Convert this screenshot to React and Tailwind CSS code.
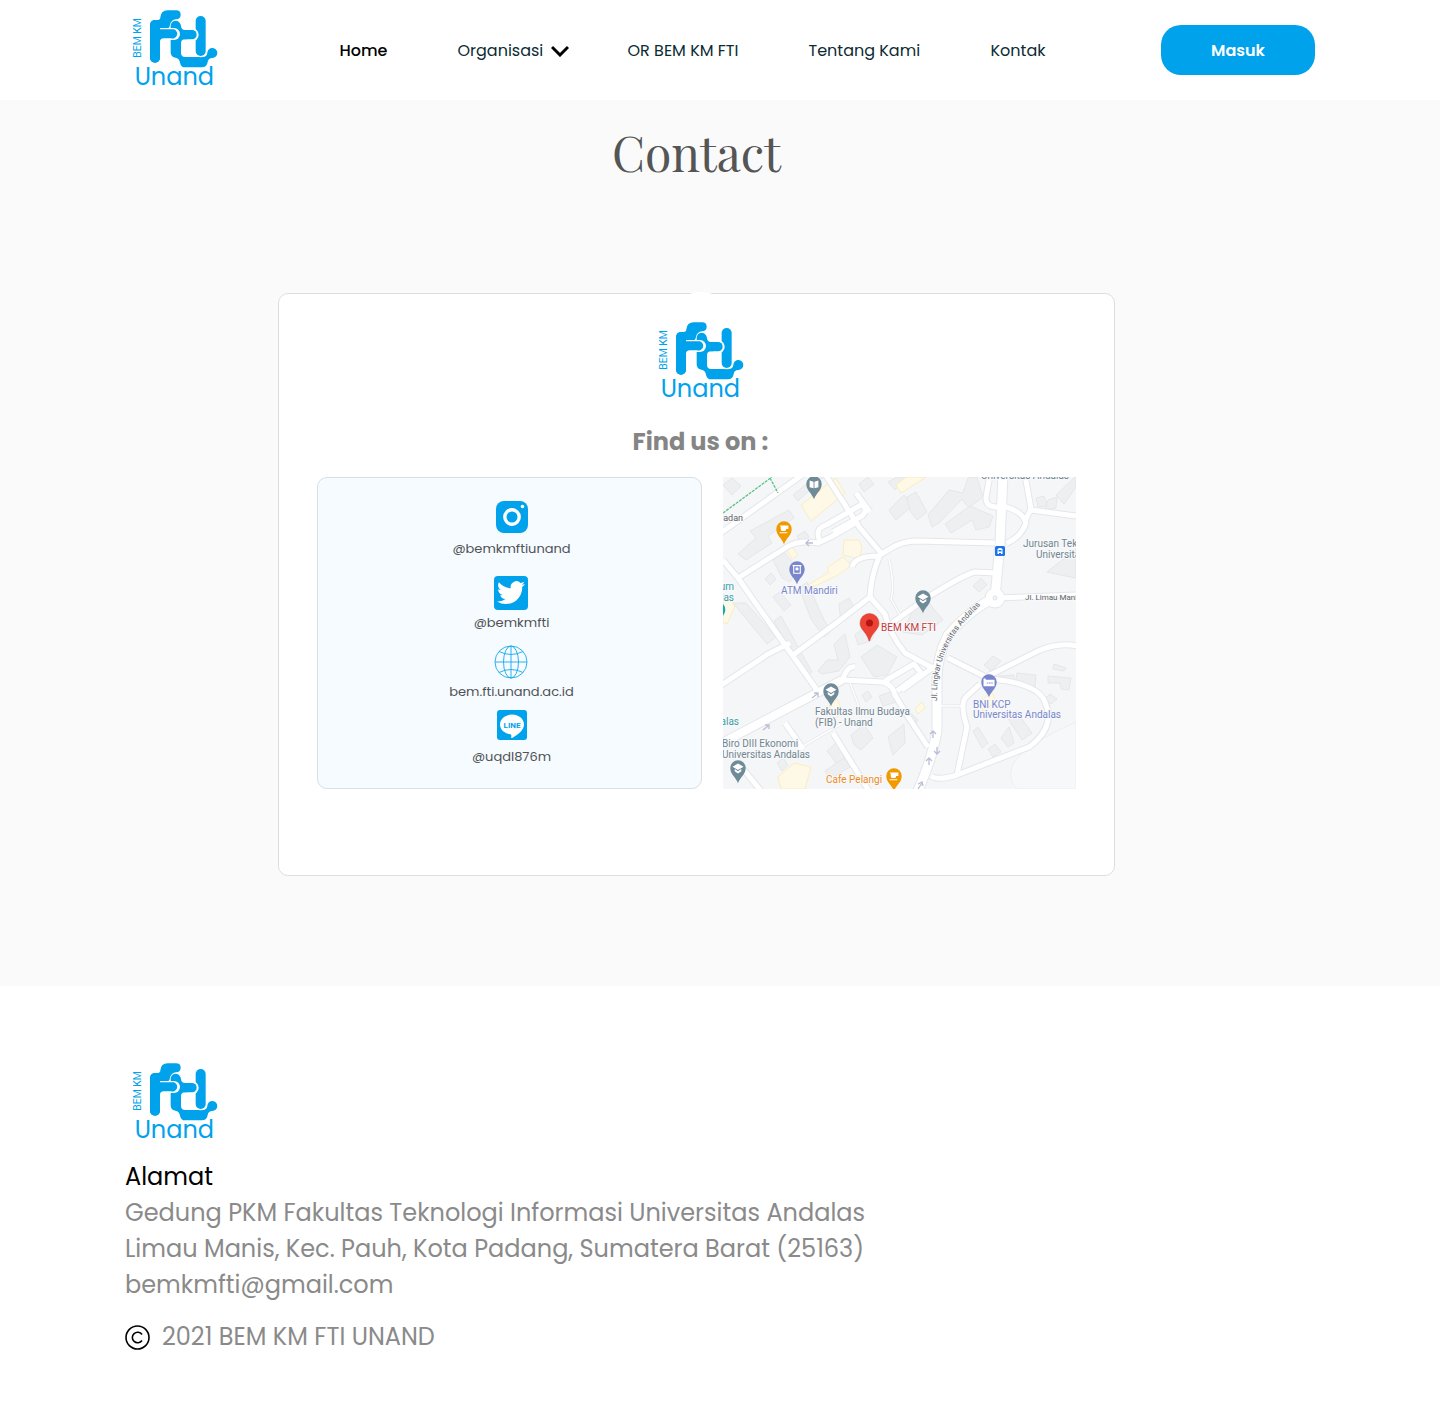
import React from "react";

const sans = "font-['Poppins',Inter,sans-serif]";

function Logo() {
  return (
    <svg viewBox="0 0 300 300" className="size-[100px] shrink-0" role="img" aria-label="BEM KM FTI Unand">
      <g fill="#00a2eb">
        <path d="M75 76Q75 60 91 60H98Q106 60 106 52Q108 31 128 31H153Q167 31 167 44Q167 57 153 58Q138 60 135 74Q134 86 122 86H105V173A15 15 0 0 1 75 173Z" />
        <path d="M137 76Q139 62 153 62Q166 64 168 78Q169 90 180 90H186V118H180Q168 118 168 130V158Q168 171 181 171H232Q246 171 247 158A15 15 0 1 1 262 174Q250 174 248 186Q246 202 230 202H180Q168 202 165 188Q163 174 151 173Q137 171 137 157Z" />
      </g>
      <path d="M108 102H147" stroke="#fff" strokeWidth="36" strokeLinecap="round" />
      <path d="M100 88H147A14 14 0 1 1 138 115H116Q105 115 105 126V130H90Z" fill="#00a2eb" />
      <path d="M90 76V173" stroke="#00a2eb" strokeWidth="30" strokeLinecap="round" />
      <path d="M227 63V153" stroke="#fff" strokeWidth="38" strokeLinecap="round" />
      <path d="M227 63V153" stroke="#00a2eb" strokeWidth="30" strokeLinecap="round" />
      <circle cx="201" cy="104" r="20" fill="#fff" />
      <path d="M180 104H201" stroke="#00a2eb" strokeWidth="28" strokeLinecap="round" />
      <text x="29" y="254" fontFamily="Poppins, Inter, sans-serif" fontSize="72" fill="#00a2eb">Unand</text>
      <text transform="translate(49 173) rotate(-90)" fontFamily="Roboto, sans-serif" fontSize="31" fill="#00a2eb">BEM KM</text>
    </svg>
  );
}

const buildings = [
  "M0 8 9 1 18 9 9 18Z",
  "M15 77 33 61 27 54 66 33 71 41 45 59 49 66 23 83Z",
  "M70 18 92 0 101 0 75 24Z",
  "M74 59 82 54 86 60 78 65Z",
  "M50 83 61 75 75 92 67 105 59 101Z",
  "M42 102 48 96 53 102 47 108Z",
  "M50 120 57 115 68 128 61 134Z",
  "M76 111 84 105 101 143 108 154 101 160 88 142Z",
  "M116 127 126 121 131 130 127 139 117 138Z",
  "M166 33 181 18 189 29 173 43Z",
  "M165 5 174 0 184 0 172 13Z",
  "M136 7 145 0 151 7 141 15Z",
  "M184 20 193 15 204 35 194 43 187 34Z",
  "M205 38 226 13 240 16 245 1 254 0 260 20 246 31 239 22 216 46 209 50Z",
  "M222 47 247 29 270 39 266 50 253 53 249 43 228 56Z",
  "M313 21 321 19 325 29 315 30Z",
  "M325 23 334 20 333 31 322 33Z",
  "M333 18 353 -1 353 10 341 27Z",
  "M324 95 353 72 353 101 347 100Z",
  "M250 109 258 101 264 108 256 115Z",
  "M191 130 201 119 210 131 220 143 199 158 180 155Z",
  "M95 194 104 183 115 183 111 167 122 157 127 180 116 194 99 197Z",
  "M132 158 146 145 153 154 148 164 135 168Z",
  "M138 180 154 168 174 180 164 198 151 200Z",
  "M51 144 58 139 89 195 82 202Z",
  "M23 126 53 160 44 167 10 126Z",
  "M139 218 145 214 149 220 143 225Z",
  "M156 219 170 214 174 225 160 229Z",
  "M128 258 141 247 150 261 138 273 131 268Z",
  "M165 260 181 247 182 266 170 278Z",
  "M104 274 115 264 125 279 114 287Z",
  "M54 286 60 281 65 288 59 294Z",
  "M102 294 121 281 127 290 107 302Z",
  "M261 188 270 179 278 184 268 194Z",
  "M294 196 313 198 312 210 292 207Z",
  "M275 199 291 198 290 207 273 204Z",
  "M325 199 348 201 346 213 338 212 337 206 325 206Z",
  "M331 187 343 191 341 194 330 192Z",
  "M322 222 327 217 334 222 328 227Z",
  "M250 254 255 250 265 266 259 271Z",
  "M265 272 272 267 278 275 270 280Z",
  "M278 261 286 250 291 266 285 270Z",
  "M284 240 293 234 309 256 299 263Z",
  "M188 236 195 243 191 249 185 242Z",
];

const yellow = [
  "M78 28 113 1 122 16 88 44Z",
  "M121 63 136 63 139 71 136 82 120 78Z",
  "M85 108 105 96 105 90 120 80 129 88 113 99 90 110Z",
  "M64 73 69 70 75 78 69 82Z",
  "M173 8 183 0 203 0 178 16Z",
  "M0 120 7 123 12 129 4 147 0 145Z",
  "M106 229 114 222 120 235 110 243Z",
  "M55 300 71 286 88 290 82 312 58 312Z",
  "M192 232 199 225 202 231 195 237Z",
  "M256 225 269 215 273 225 260 234Z",
];

const minorRoads = [
  "M-5 58 82 -4",
  "M0 83 15 101 55 158 94 213",
  "M15 101 64 70Q75 63 95 66L108 60 134 45",
  "M97 64Q91 52 103 48L138 28Q146 32 139 39L110 55",
  "M147 35 133 16",
  "M102 -3 137 51 158 76",
  "M129 90Q132 79 155 79L172 69Q182 64 195 64L272 66",
  "M157 78Q148 98 147 120L162 137Q166 156 182 176L208 190",
  "M147 120 112 147 70 178",
  "M-3 209 45 177 67 166",
  "M169 146 205 120Q240 98 252 95L272 96",
  "M267 -2 263 20Q262 29 272 30H283Q300 35 303 46Q298 60 284 66",
  "M302 -2 308 32 302 44M308 33 353 39",
  "M225 181 267 202Q315 206 322 225Q333 250 306 270L234 298Q215 304 208 299",
  "M267 198 315 174Q335 165 355 169",
  "M257 207 244 219Q236 225 244 250L234 298",
  "M119 203 123 195Q127 189 132 190",
  "M119 203 160 205Q170 208 172 218L184 238 205 270",
  "M162 204 191 187 198 196 174 214",
  "M179 213 212 189",
  "M110 256 146 314M62 246 80 272M17 288 38 314",
];

function Pin({ x, y, color, children }) {
  return (
    <g transform={`translate(${x} ${y}) scale(1.1)`}>
      <path d="M0 13C-2 7-7 5-7-1A7 7 0 0 1 7-1C7 5 2 7 0 13Z" fill={color} />
      {children}
    </g>
  );
}

function Book() {
  return <path d="M-4-4-.4-3V3L-4 2ZM4-4 .4-3V3L4 2Z" fill="#fff" />;
}
function Cap() {
  return <path d="M-5-2 0-5 5-2 0 1ZM-3 0 0 2 3 0V2L0 4-3 2Z" fill="#fff" />;
}
function Cup() {
  return <path d="M-4-4H4V-1H2Q2 1 0 1H-1Q-3 1-3-1V-3M-4 2H3V3H-4Z" fill="#fff" />;
}

function CampusMap() {
  return (
    <svg viewBox="0 0 353 312" className="block w-full" role="img" aria-label="Peta lokasi BEM KM FTI" fontFamily="Roboto, sans-serif" fontSize="10">
      <rect width="353" height="312" fill="#f5f6f8" />
      <path d="M353 245Q292 272 288 293Q286 304 294 312H353Z" fill="#f7f8f9" stroke="#eceef0" />
      <g fill="#eeeff1" stroke="#e1e3e6" strokeWidth=".8">
        {buildings.map((d) => <path key={d} d={d} />)}
      </g>
      <g fill="#fef9e7" stroke="#fbe9b4" strokeWidth=".8">
        {yellow.map((d) => <path key={d} d={d} />)}
      </g>
      <g fill="none" stroke="#e5e6ea" strokeLinejoin="round">
        {minorRoads.map((d) => <path key={d} d={d} strokeWidth="7" />)}
        <path d="M-5 268 92 217 119 203" strokeWidth="10" />
        <path d="M280 -3 277 66 272 121Q250 130 225 158 214 180 214 203V253Q210 280 194 316" strokeWidth="11" />
        <path d="M272 121 300 120 355 118" strokeWidth="7" />
        <path d="M218 229H238M75 272 125 243M127 206 140 240M166 82Q172 110 168 122L178 140" strokeWidth="3" />
      </g>
      <circle cx="272" cy="121" r="10" fill="#fff" stroke="#e5e6ea" />
      <g fill="none" stroke="#fff" strokeLinejoin="round">
        {minorRoads.map((d) => <path key={d} d={d} strokeWidth="5" />)}
        <path d="M-5 268 92 217 119 203" strokeWidth="8" />
        <path d="M280 -3 277 66 272 121Q250 130 225 158 214 180 214 203V253Q210 280 194 316" strokeWidth="9" />
        <path d="M272 121 300 120 355 118" strokeWidth="5" />
        <path d="M218 229H238M75 272 125 243M127 206 140 240M166 82Q172 110 168 122L178 140" strokeWidth="1.5" />
      </g>
      <circle cx="272" cy="121" r="2" fill="#f5f6f8" stroke="#e0e2e5" />
      <path d="M0 36 49 0M47 1 55 16" fill="none" stroke="#5cc289" strokeWidth="1.3" strokeDasharray="3 1" />
      <g fill="none" stroke="#b9bed6" strokeWidth="1.3">
        <path d="M90 66H83M86 63 83 66 86 69" />
        <path d="M89 221 94 217M91 216H95V220" />
        <path d="M40 253 45 249M42 248H46V252" />
        <path d="M210 261V254M207 257 210 254 213 257" />
        <path d="M214 270V277M211 274 214 277 217 274" />
        <path d="M206 288V281M203 284 206 281 209 284" />
        <path d="M195 312 199 306M195 307 199 305 200 309" />
      </g>

      <Pin x={91} y={8} color="#6f8b98"><Book /></Pin>
      <Pin x={61} y={53} color="#f29900"><Cup /></Pin>
      <Pin x={74} y={93} color="#7986cb">
        <path d="M-4-4H4M-3-4V3H3V-4" fill="none" stroke="#fff" />
        <circle r="1.5" cy="-1" fill="#fff" />
      </Pin>
      <Pin x={200} y={122} color="#6f8b98"><Cap /></Pin>
      <Pin x={108} y={215} color="#6f8b98"><Cap /></Pin>
      <Pin x={15} y={292} color="#6f8b98"><Cap /></Pin>
      <Pin x={171} y={300} color="#f29900"><Cup /></Pin>
      <Pin x={266} y={206} color="#7986cb">
        <path d="M-5-4H-3V-3H5V3H-5Z" fill="#fff" />
        <path d="M-2 0H4" stroke="#7986cb" strokeDasharray="1.4 .6" />
      </Pin>
      <path d="M0 127Q3 130 2 135L0 139Z" fill="#12a9b5" />
      <path d="M146 164C144 155 137 153 137 146A9.500 9.500 0 0 1 156 146C156 153 149 155 146.500 164Z" fill="#ea4335" stroke="#d8382c" strokeWidth=".5" />
      <circle cx="146.500" cy="146" r="3.500" fill="#b31412" />
      <rect x="272" y="69" width="10" height="10" rx="1.500" fill="#1a73e8" />
      <path d="M274.500 77V72Q277 70 279.500 72V77H278V76H276V77Z" fill="#fff" />
      <path d="M275.500 73H278.500V74.500H275.500Z" fill="#1a73e8" />

      <g stroke="#f8f9fb" strokeWidth="2" paintOrder="stroke">
        <g fill="#71858f">
          <text x="258" y="2">Universitas Andalas</text>
          <text x="300" y="70">Jurusan Teknik</text>
          <text x="313" y="81">Universitas</text>
          <text x="92" y="238">Fakultas Ilmu Budaya</text>
          <text x="92" y="249">(FIB) - Unand</text>
          <text x="-1" y="270">Biro DIII Ekonomi</text>
          <text x="-1" y="281">Universitas Andalas</text>
        </g>
        <g fill="#7986cb">
          <text x="58" y="117">ATM Mandiri</text>
          <text x="250" y="231">BNI KCP</text>
          <text x="250" y="241">Universitas Andalas</text>
        </g>
        <g fill="#3d9ea6">
          <text x="11" y="113" textAnchor="end">Museum</text>
          <text x="11" y="124" textAnchor="end">Andalas</text>
          <text x="16" y="248" textAnchor="end">Andalas</text>
        </g>
        <text x="158" y="154" fill="#c5393b">BEM KM FTI</text>
        <text x="103" y="306" fill="#ef8b1c">Cafe Pelangi</text>
        <g fill="#5f6368" fontSize="8">
          <text x="20" y="44" textAnchor="end" fontSize="9">Padan</text>
          <text x="302" y="123">Jl. Limau Manis</text>
          <path id="ring-road" d="M214 224C213 175 232 152 262 124" fill="none" stroke="none" />
          <text><textPath href="#ring-road">Jl. Lingkar Universitas Andalas</textPath></text>
        </g>
      </g>
    </svg>
  );
}

function InstagramIcon() {
  return (
    <svg viewBox="0 0 32 32" className="size-8" aria-hidden="true">
      <rect width="32" height="32" rx="8" fill="#00a2eb" />
      <circle cx="16" cy="16" r="7.200" fill="none" stroke="#fff" strokeWidth="3.400" />
      <circle cx="26.500" cy="5.500" r="1.800" fill="#fff" />
    </svg>
  );
}

function TwitterIcon() {
  return (
    <svg viewBox="0 0 34 34" className="size-[34px]" aria-hidden="true">
      <rect width="34" height="34" rx="4" fill="#00a2eb" />
      <path transform="translate(3 2.600) scale(1.170)" fill="#fff" d="M23.950 4.570a10 10 0 0 1-2.820.770 4.960 4.960 0 0 0 2.160-2.720c-.950.550-2 .950-3.130 1.180a4.920 4.920 0 0 0-8.380 4.480C7.690 8.090 4.070 6.130 1.640 3.160a4.920 4.920 0 0 0 1.520 6.570 4.900 4.900 0 0 1-2.230-.610v.060c0 2.390 1.700 4.380 3.950 4.830a5 5 0 0 1-2.210.080 4.940 4.940 0 0 0 4.600 3.420A9.870 9.870 0 0 1 0 19.540a13.990 13.990 0 0 0 7.550 2.210c9.050 0 14-7.500 14-13.980 0-.210 0-.420-.020-.630a9.940 9.940 0 0 0 2.460-2.550z" />
    </svg>
  );
}

function GlobeIcon() {
  return (
    <svg viewBox="0 0 34 34" className="size-[34px]" fill="none" stroke="#18a9ec" strokeWidth=".9" aria-hidden="true">
      <circle cx="17" cy="17" r="16" />
      <ellipse cx="17" cy="17" rx="7.500" ry="16" />
      <path d="M17 1V33M1 17H33M5 6.500Q17 12.500 29 6.500M5 27.500Q17 21.500 29 27.500" />
    </svg>
  );
}

function LineIcon() {
  return (
    <svg viewBox="0 0 30 30" className="size-[30px]" role="img" aria-label="LINE">
      <rect width="30" height="30" rx="3" fill="#00a2eb" />
      <path d="M15 4.500C8.500 4.500 3 8.800 3 14.500c0 5 4.300 8.900 10.200 9.800 1.200.2 1.300.9 1 3.200 0 .7.400.7 1 .4C20 25.300 27 20.500 27 14.500 27 8.800 21.500 4.500 15 4.500Z" fill="#fff" />
      <text x="15" y="18" textAnchor="middle" fontFamily="Roboto, sans-serif" fontWeight="700" fontSize="8" fill="#00a2eb">LINE</text>
    </svg>
  );
}

const socials = [
  { icon: InstagramIcon, label: "@bemkmftiunand", box: "h-[75px]", gap: "gap-[6px]" },
  { icon: TwitterIcon, label: "@bemkmfti", box: "h-[69px]", gap: "gap-[3px]" },
  { icon: GlobeIcon, label: "bem.fti.unand.ac.id", box: "h-[65px]", gap: "gap-[3px]" },
  { icon: LineIcon, label: "@uqdl876m", box: "h-[60px]", gap: "gap-[7px]" },
];

function Header() {
  return (
    <header className="flex h-[100px] items-center justify-between bg-white px-[125px] whitespace-nowrap">
      <a href="#home"><Logo /></a>
      <nav aria-label="Utama" className="flex items-center gap-[70px] pt-0.5 text-base text-[#0b2b33]">
        <a href="#home" className="w-12 font-medium text-black">Home</a>
        <button type="button" className="flex w-[100px] items-center gap-2">
          <span className="w-[86px]">Organisasi</span>
          <svg viewBox="0 0 18 12" className="h-3 w-[18px] shrink-0" fill="none" stroke="#000" strokeWidth="3" aria-hidden="true">
            <path d="M1 2 9 10 17 2" />
          </svg>
        </button>
        <a href="#or" className="w-[111px]">OR BEM KM FTI</a>
        <a href="#tentang" className="w-28">Tentang Kami</a>
        <a href="#kontak" className="w-14">Kontak</a>
      </nav>
      <button type="button" className="h-[50px] w-[154px] rounded-[20px] bg-[#00a2eb] pt-0.5 text-base font-semibold text-white">Masuk</button>
    </header>
  );
}

export default function App() {
  return (
    <div className={`${sans} bg-white`}>
      <Header />
      <main className="flex flex-col items-center bg-[#fafafa] pt-5 pr-[47px] pb-[110px]">
        <h1 className="font-['Playfair_Display','Liberation_Serif',serif] text-5xl leading-[64px] text-[#555]">Contact</h1>
        <section className="relative mt-[109px] w-full max-w-[837px] rounded-[10px] border border-[#dcdfe2] bg-white px-[38px] pt-[18px] pb-[86px]">
          <div className="absolute inset-x-0 -top-0.5 flex justify-center pl-2">
            <span className="h-[6px] w-6 rounded-[50%] bg-white" />
          </div>
          <div className="flex flex-col items-center pl-2">
            <Logo />
            <h2 className="mt-3 text-2xl leading-9 font-bold text-[#858585]">Find us on :</h2>
          </div>
          <div className="mt-[17px] flex items-start gap-[21px]">
            <ul className="flex w-[385px] shrink-0 flex-col rounded-[10px] border border-[#d6e0e6] bg-[#f5fbff] pt-[23px] pb-[18px] pl-1">
              {socials.map(({ icon: Icon, label, box, gap }) => (
                <li key={label} className={`${box} flex justify-center`}>
                  <a href={`#${label}`} className={`${gap} flex flex-col items-center text-[13px] leading-5 text-[#505254]`}>
                    <Icon />
                    {label}
                  </a>
                </li>
              ))}
            </ul>
            <div className="min-w-0 flex-1">
              <CampusMap />
            </div>
          </div>
        </section>
      </main>
      <footer className="px-[125px] pt-[67px] pb-[66px] text-2xl leading-9 text-[#8a8a8a]">
        <Logo />
        <address className="mt-[6px] not-italic">
          <h3 className="text-black">Alamat</h3>
          <p>Gedung PKM Fakultas Teknologi Informasi Universitas Andalas</p>
          <p>Limau Manis, Kec. Pauh, Kota Padang, Sumatera Barat (25163)</p>
          <a href="mailto:bemkmfti@gmail.com">bemkmfti@gmail.com</a>
        </address>
        <p className="mt-4 flex items-center gap-3">
          <svg viewBox="0 0 25 25" className="size-[25px]" fill="none" stroke="#000" strokeWidth="1.600" aria-hidden="true">
            <circle cx="12.500" cy="12.500" r="11.500" />
            <path d="M17 9.500A5.300 5.300 0 1 0 17 15.500" />
          </svg>
          2021 BEM KM FTI UNAND
        </p>
      </footer>
    </div>
  );
}
